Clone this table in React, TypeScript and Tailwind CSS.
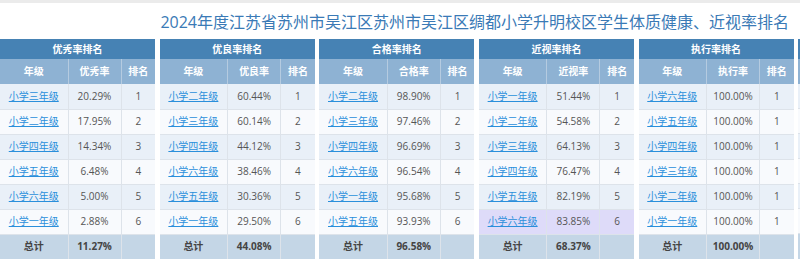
import React from "react";

type Row = { grade: string; rate: string; rank: number; hl?: boolean };
type Board = { title: string; label: string; rows: Row[]; total: string };

const boards: Board[] = [
  {
    title: "优秀率排名",
    label: "优秀率",
    total: "11.27%",
    rows: [
      { grade: "小学三年级", rate: "20.29%", rank: 1 },
      { grade: "小学二年级", rate: "17.95%", rank: 2 },
      { grade: "小学四年级", rate: "14.34%", rank: 3 },
      { grade: "小学五年级", rate: "6.48%", rank: 4 },
      { grade: "小学六年级", rate: "5.00%", rank: 5 },
      { grade: "小学一年级", rate: "2.88%", rank: 6 },
    ],
  },
  {
    title: "优良率排名",
    label: "优良率",
    total: "44.08%",
    rows: [
      { grade: "小学二年级", rate: "60.44%", rank: 1 },
      { grade: "小学三年级", rate: "60.14%", rank: 2 },
      { grade: "小学四年级", rate: "44.12%", rank: 3 },
      { grade: "小学六年级", rate: "38.46%", rank: 4 },
      { grade: "小学五年级", rate: "30.36%", rank: 5 },
      { grade: "小学一年级", rate: "29.50%", rank: 6 },
    ],
  },
  {
    title: "合格率排名",
    label: "合格率",
    total: "96.58%",
    rows: [
      { grade: "小学二年级", rate: "98.90%", rank: 1 },
      { grade: "小学三年级", rate: "97.46%", rank: 2 },
      { grade: "小学四年级", rate: "96.69%", rank: 3 },
      { grade: "小学六年级", rate: "96.54%", rank: 4 },
      { grade: "小学一年级", rate: "95.68%", rank: 5 },
      { grade: "小学五年级", rate: "93.93%", rank: 6 },
    ],
  },
  {
    title: "近视率排名",
    label: "近视率",
    total: "68.37%",
    rows: [
      { grade: "小学一年级", rate: "51.44%", rank: 1 },
      { grade: "小学二年级", rate: "54.58%", rank: 2 },
      { grade: "小学三年级", rate: "64.13%", rank: 3 },
      { grade: "小学四年级", rate: "76.47%", rank: 4 },
      { grade: "小学五年级", rate: "82.19%", rank: 5 },
      { grade: "小学六年级", rate: "83.85%", rank: 6, hl: true },
    ],
  },
  {
    title: "执行率排名",
    label: "执行率",
    total: "100.00%",
    rows: [
      { grade: "小学六年级", rate: "100.00%", rank: 1 },
      { grade: "小学五年级", rate: "100.00%", rank: 1 },
      { grade: "小学四年级", rate: "100.00%", rank: 1 },
      { grade: "小学三年级", rate: "100.00%", rank: 1 },
      { grade: "小学二年级", rate: "100.00%", rank: 1 },
      { grade: "小学一年级", rate: "100.00%", rank: 1 },
    ],
  },
];

const rowBg = (i: number, hl?: boolean) =>
  hl ? "bg-[#dedbf9]" : i % 2 === 0 ? "bg-[#e9f0f8]" : "bg-[#f8fafd]";

const RankTable = ({ board }: { board: Board }) => {
  return (
    <table className="w-[155px] shrink-0 table-fixed border-collapse text-[10px]">
      <colgroup>
        <col className="w-[68px]" />
        <col className="w-[53px]" />
        <col className="w-[34px]" />
      </colgroup>
      <thead>
        <tr className="h-[20px] bg-[#4682b4] text-white">
          <th colSpan={3} className="font-bold">
            {board.title}
          </th>
        </tr>
        <tr className="h-[25px] bg-[#8eb2d3] text-white">
          <th className="border-r border-[#b5cbe0] font-bold">年级</th>
          <th className="border-r border-[#b5cbe0] font-bold">{board.label}</th>
          <th className="font-bold">排名</th>
        </tr>
      </thead>
      <tbody>
        {board.rows.map((row, i) => (
          <tr key={i} className={"h-[25px] border-b border-[#dde3ea] " + rowBg(i, row.hl)}>
            <td className="border-r border-[#dde3ea] text-center">
              <a href="#" className="text-[#2a8fdb] underline">
                {row.grade}
              </a>
            </td>
            <td className="border-r border-[#dde3ea] text-center text-[#555]">{row.rate}</td>
            <td className="text-center text-[#555]">{row.rank}</td>
          </tr>
        ))}
        <tr className="h-[25px] bg-[#c4d6e6] font-bold text-[#444]">
          <td className="border-r border-[#dde3ea] text-center">总计</td>
          <td className="border-r border-[#dde3ea] text-center">{board.total}</td>
          <td></td>
        </tr>
      </tbody>
    </table>
  );
};

// the next table is cut off by the window edge, only its first pixels show
const PartialTable = () => {
  return (
    <div className="flex w-[155px] shrink-0 flex-col">
      <div className="h-[20px] bg-[#4682b4]" />
      <div className="h-[25px] bg-[#8eb2d3]" />
      {[0, 1, 2, 3, 4, 5].map((i) => (
        <div key={i} className={"h-[25px] border-b border-[#dde3ea] " + rowBg(i)} />
      ))}
      <div className="h-[25px] bg-[#c4d6e6]" />
    </div>
  );
};

const App = () => {
  return (
    <div
      className="h-[262px] w-[800px] overflow-hidden bg-white"
      style={{ fontFamily: '"Open Sans", "Noto Sans CJK SC", sans-serif' }}
    >
      <div className="h-[3px] bg-[#ebebeb]" />
      <div className="flex h-[36px] justify-end pr-[11px] pt-[8px]">
        <h1 className="whitespace-nowrap text-[16px] leading-[22px] text-[#3a7ab6]">
          2024年度江苏省苏州市吴江区苏州市吴江区绸都小学升明校区学生体质健康、近视率排名
        </h1>
      </div>
      <div className="flex w-[956px] gap-[4.6px]">
        {boards.map((b) => (
          <RankTable key={b.title} board={b} />
        ))}
        <PartialTable />
      </div>
    </div>
  );
};

export default App;
